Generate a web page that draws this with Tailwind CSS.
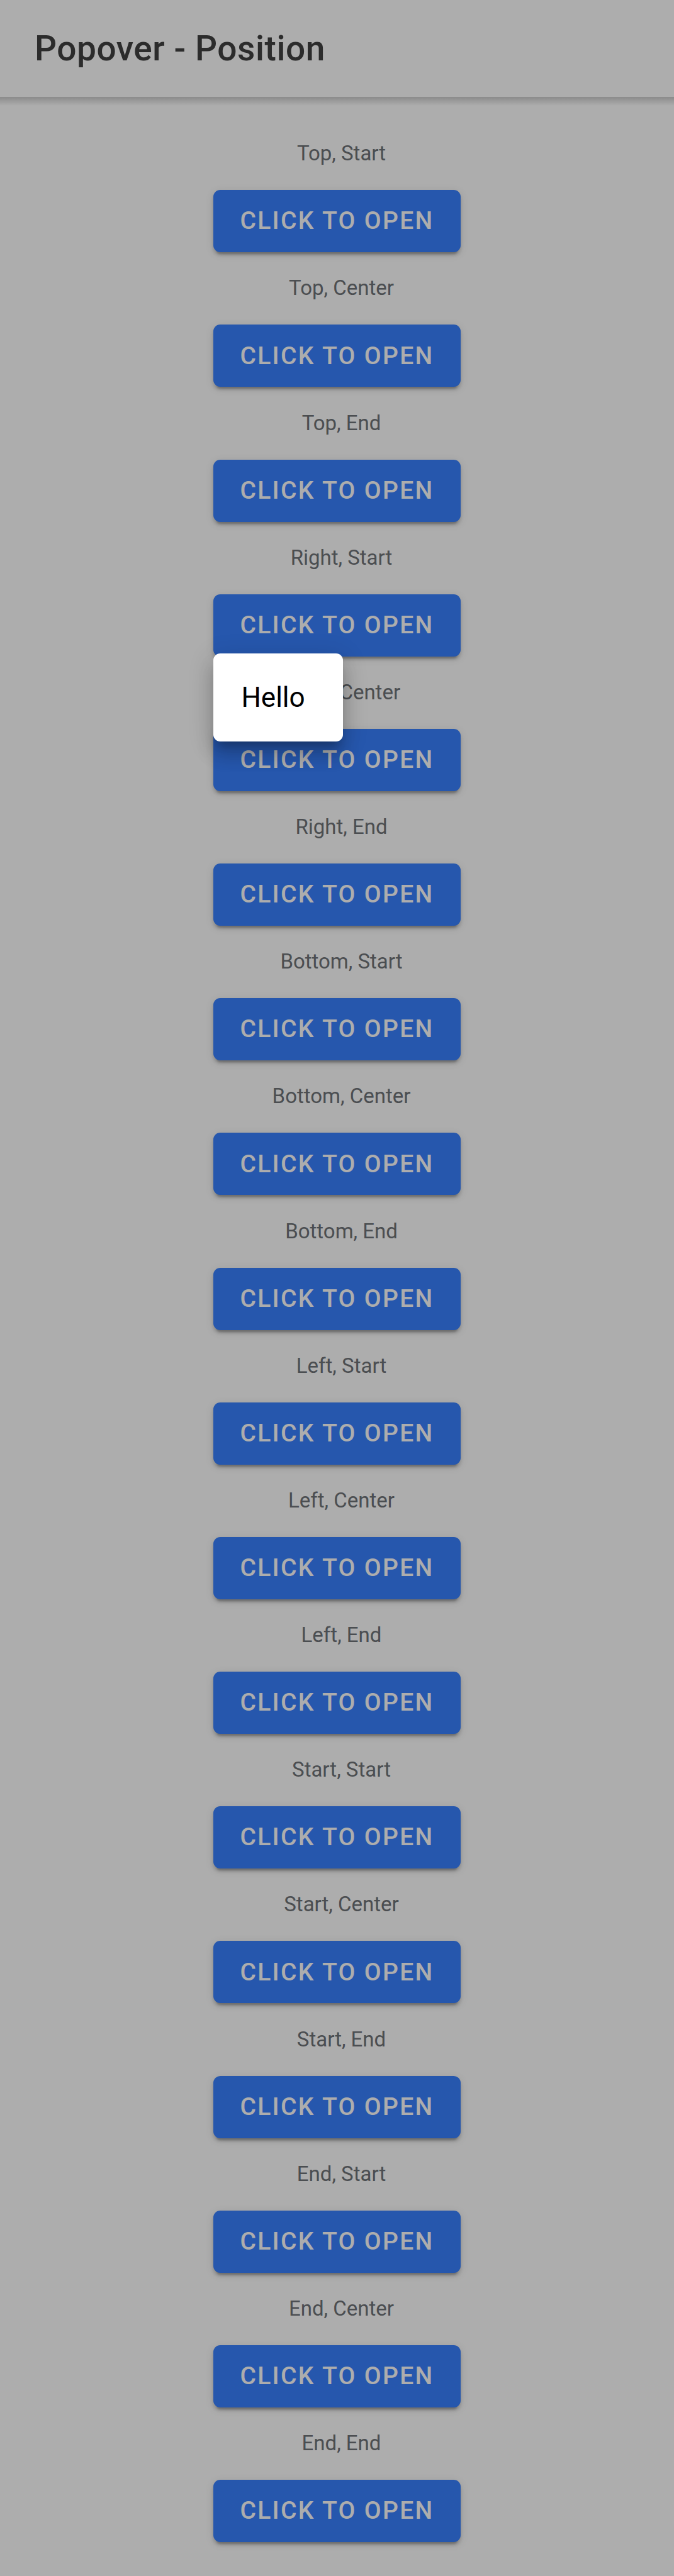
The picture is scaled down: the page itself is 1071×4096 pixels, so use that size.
<!DOCTYPE html>
<html lang="en">
<head>
<meta charset="utf-8">
<meta name="viewport" content="width=device-width, initial-scale=1">
<title>Popover - Position</title>
<script src="https://cdn.jsdelivr.net/npm/@tailwindcss/browser@4"></script>
</head>
<body class="relative flex min-h-screen flex-col bg-white font-[Roboto,sans-serif] text-black">
  <header class="flex h-[154px] shrink-0 items-center bg-white px-[55px]">
    <h1 class="text-[55px] font-medium tracking-[0.01em] text-[#424242]">Popover - Position</h1>
  </header>
  <div class="h-[14px] shrink-0 bg-linear-to-b from-black/20 to-transparent"></div>

  <main class="grid flex-1 auto-rows-fr pt-[19px] pb-[54px] text-center
    [&_section]:flex [&_section]:flex-col [&_section]:items-center [&_section]:justify-end
    [&_h2]:mb-[38px] [&_h2]:pl-[14px] [&_h2]:text-[33px] [&_h2]:leading-[40px] [&_h2]:text-[#6f7378]
    [&_button]:h-[99px] [&_button]:rounded-[11px] [&_button]:bg-[#3880ff] [&_button]:px-[42px] [&_button]:text-[39px] [&_button]:font-medium [&_button]:tracking-[0.06em] [&_button]:text-white [&_button]:uppercase [&_button]:shadow-[0_8px_3px_-5px_rgb(0_0_0/0.2),0_5px_5px_0_rgb(0_0_0/0.14),0_3px_14px_0_rgb(0_0_0/0.12)]">
    <section><h2>Top, Start</h2><button type="button">Click to Open</button></section>
    <section><h2>Top, Center</h2><button type="button">Click to Open</button></section>
    <section><h2>Top, End</h2><button type="button">Click to Open</button></section>
    <section>
      <h2>Right, Start</h2>
      <div class="relative flex">
        <button type="button" aria-expanded="true" aria-controls="popover">Click to Open</button>
        <div id="popover" role="dialog" aria-label="Hello" class="absolute top-full left-0 z-20 -mt-[5px] flex h-[140px] w-[206px] items-center rounded-[11px] bg-white px-[44px] text-[44px] shadow-[0_14px_14px_-8px_rgb(0_0_0/0.2),0_22px_27px_3px_rgb(0_0_0/0.14),0_8px_38px_5px_rgb(0_0_0/0.12)]">Hello</div>
      </div>
    </section>
    <section><h2>Right, Center</h2><button type="button">Click to Open</button></section>
    <section><h2>Right, End</h2><button type="button">Click to Open</button></section>
    <section><h2>Bottom, Start</h2><button type="button">Click to Open</button></section>
    <section><h2>Bottom, Center</h2><button type="button">Click to Open</button></section>
    <section><h2>Bottom, End</h2><button type="button">Click to Open</button></section>
    <section><h2>Left, Start</h2><button type="button">Click to Open</button></section>
    <section><h2>Left, Center</h2><button type="button">Click to Open</button></section>
    <section><h2>Left, End</h2><button type="button">Click to Open</button></section>
    <section><h2>Start, Start</h2><button type="button">Click to Open</button></section>
    <section><h2>Start, Center</h2><button type="button">Click to Open</button></section>
    <section><h2>Start, End</h2><button type="button">Click to Open</button></section>
    <section><h2>End, Start</h2><button type="button">Click to Open</button></section>
    <section><h2>End, Center</h2><button type="button">Click to Open</button></section>
    <section><h2>End, End</h2><button type="button">Click to Open</button></section>
  </main>

  <!-- Backdrop behind the open popover -->
  <div class="absolute inset-0 z-10 bg-black/32"></div>
</body>
</html>
